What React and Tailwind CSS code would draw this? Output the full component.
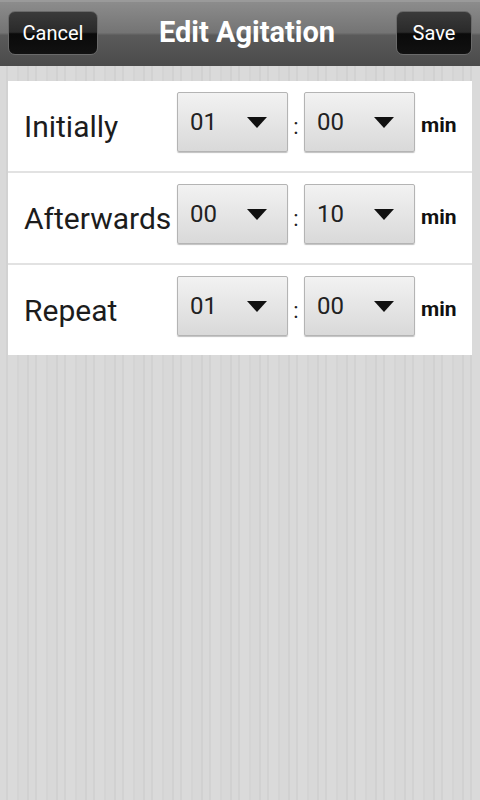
import React from 'react'

const rows = [
  { label: 'Initially', h: '01', m: '00' },
  { label: 'Afterwards', h: '00', m: '10' },
  { label: 'Repeat', h: '01', m: '00' },
]

function Spinner({ value }) {
  return (
    <div className="mb-2 flex h-[60px] w-[111px] items-center justify-between rounded-[2px] border border-[#b4b4b4] bg-gradient-to-b from-[#f2f2f2] to-[#d9d9d9] pl-[12px] pr-[20px] shadow-[0_1px_1px_rgba(0,0,0,0.25)]">
      <span className="text-[24px] leading-none text-[#222]">{value}</span>
      <svg width="20" height="11" viewBox="0 0 20 11">
        <polygon points="0,0 20,0 10,11" fill="#111" />
      </svg>
    </div>
  )
}

function HeaderButton({ children, className }) {
  return (
    <button
      className={`flex h-[44px] items-center justify-center rounded-[7px] border border-[#6a6a6a] bg-[linear-gradient(180deg,#3a3a3a_0%,#2a2a2a_48%,#0a0a0a_52%,#111_100%)] text-[20px] text-white ${className}`}
    >
      {children}
    </button>
  )
}

export default function App() {
  return (
    <div className="h-[800px] w-[480px] overflow-hidden bg-[repeating-linear-gradient(90deg,#d9d9d9_0px,#d9d9d9_6px,#d2d2d2_6px,#d2d2d2_8px,#dadada_8px,#dadada_17px,#d4d4d4_17px,#d4d4d4_19px,#d8d8d8_19px,#d8d8d8_27px,#d1d1d1_27px,#d1d1d1_29px)] font-['Roboto',sans-serif]">
      {/* Header */}
      <div className="flex h-[66px] items-center justify-between border-t-2 border-[#9a9a9a] bg-[linear-gradient(180deg,#8c8c8c_0%,#747474_48%,#5a5a5a_52%,#4b4b4b_100%)] px-2 pb-[3px]">
        <HeaderButton className="w-[90px]">Cancel</HeaderButton>
        <h1 className="text-[29px] font-bold text-white">Edit Agitation</h1>
        <HeaderButton className="w-[76px]">Save</HeaderButton>
      </div>

      {/* Rows */}
      <div className="mx-2 mt-[15px] bg-white">
        {rows.map((r, i) => (
          <div key={r.label}>
            {i > 0 && <div className="h-[2px] bg-[#e2e2e2]" />}
            <div className="flex h-[90px] items-center pl-4">
              <span className="w-[153px] whitespace-nowrap text-[30px] text-[#1c1c1c]">{r.label}</span>
              <Spinner value={r.h} />
              <span className="w-4 text-center text-[22px] text-[#222]">:</span>
              <Spinner value={r.m} />
              <span className="ml-[6px] text-[21px] font-bold text-[#111]">min</span>
            </div>
          </div>
        ))}
      </div>
    </div>
  )
}
